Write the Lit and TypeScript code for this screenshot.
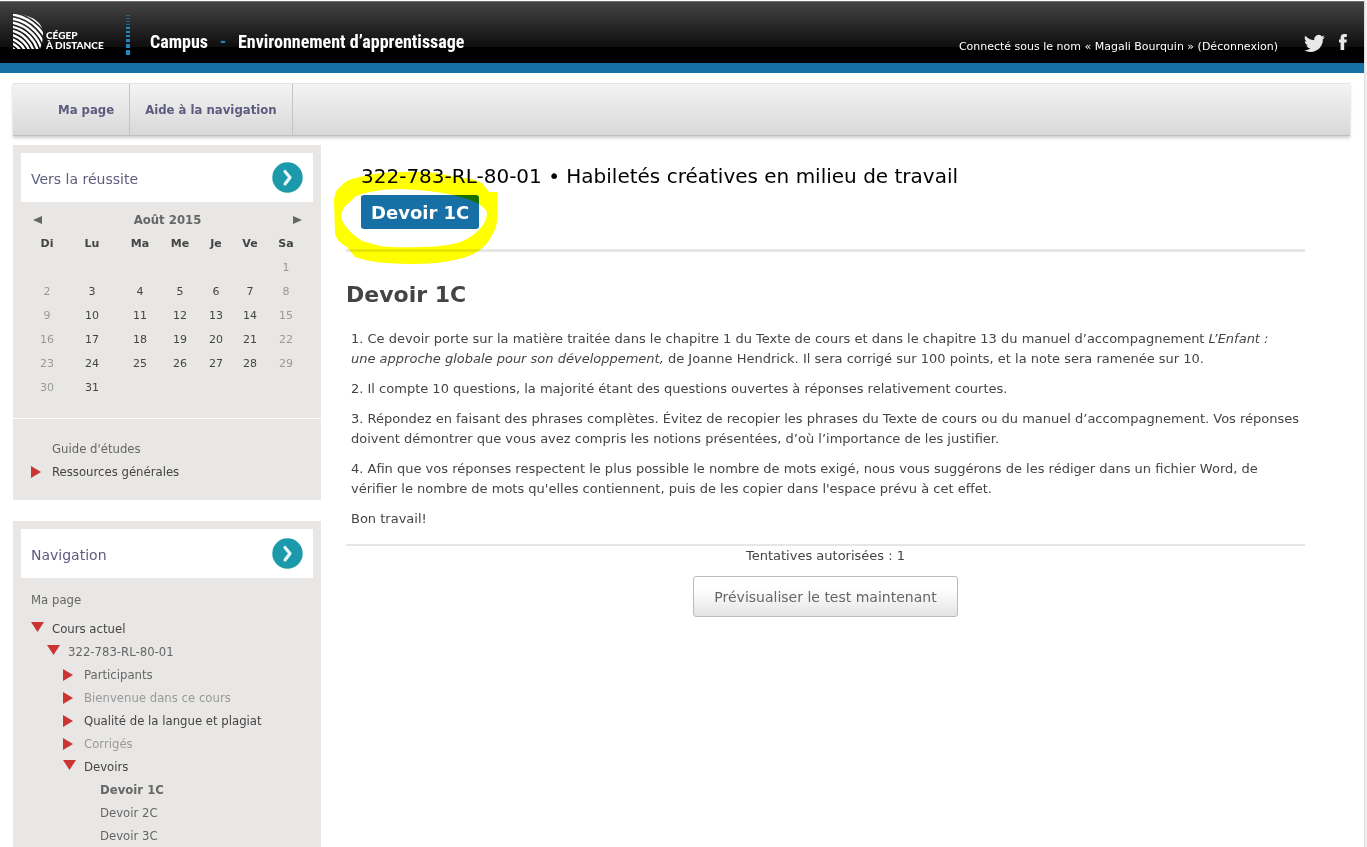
import { LitElement, html, css, svg, nothing } from "lit";
import { customElement, property } from "lit/decorators.js";
import { classMap } from "lit/directives/class-map.js";

type TreeItem = {
  label: string;
  level: number;
  arrow?: "right" | "down";
  tone?: "dark" | "dim" | "current";
};

const WEEKDAYS = ["Di", "Lu", "Ma", "Me", "Je", "Ve", "Sa"];

const WEEKS: (number | null)[][] = [
  [null, null, null, null, null, null, 1],
  [2, 3, 4, 5, 6, 7, 8],
  [9, 10, 11, 12, 13, 14, 15],
  [16, 17, 18, 19, 20, 21, 22],
  [23, 24, 25, 26, 27, 28, 29],
  [30, 31, null, null, null, null, null],
];

const RESOURCES: TreeItem[] = [
  { label: "Guide d'études", level: 1 },
  { label: "Ressources générales", level: 1, arrow: "right", tone: "dark" },
];

const COURSE: TreeItem[] = [
  { label: "Cours actuel", level: 1, arrow: "down", tone: "dark" },
  { label: "322-783-RL-80-01", level: 2, arrow: "down" },
  { label: "Participants", level: 3, arrow: "right" },
  { label: "Bienvenue dans ce cours", level: 3, arrow: "right", tone: "dim" },
  { label: "Qualité de la langue et plagiat", level: 3, arrow: "right", tone: "dark" },
  { label: "Corrigés", level: 3, arrow: "right", tone: "dim" },
  { label: "Devoirs", level: 3, arrow: "down", tone: "dark" },
  { label: "Devoir 1C", level: 4, tone: "current" },
  { label: "Devoir 2C", level: 4 },
  { label: "Devoir 3C", level: 4 },
];

@customElement("nav-tree")
class NavTree extends LitElement {
  @property({ attribute: false }) items: TreeItem[] = [];

  static styles = css`
    :host {
      display: block;
    }
    .list {
      list-style: none;
      margin: 0;
      padding: 0;
    }
    .item {
      display: flex;
      align-items: center;
      height: 23px;
    }
    .l2 { padding-left: 16px; }
    .l3 { padding-left: 32px; }
    .l4 { padding-left: 48px; }
    .mark {
      flex: none;
      width: 21px;
      height: 14px;
    }
    .link {
      color: #666;
      font-size: 13px;
      line-height: 23px;
      text-decoration: none;
      white-space: nowrap;
    }
    .dark { color: #444; }
    .dim { color: #999; }
    .current { font-weight: bold; }
  `;

  render() {
    return html`<ul class="list">
      ${this.items.map(
        (i) => html`<li class="item l${i.level}">
          <svg class="mark" viewBox="0 0 21 14" aria-hidden="true">
            ${i.arrow === "right" ? svg`<path d="M0 1L10 7L0 13Z" fill="#cc3333" />` : nothing}
            ${i.arrow === "down" ? svg`<path d="M0 0H13L6.5 10Z" fill="#cc3333" />` : nothing}
          </svg>
          <a
            class=${classMap({ link: true, dark: i.tone === "dark", dim: i.tone === "dim", current: i.tone === "current" })}
            href="#"
            >${i.label}</a
          >
        </li>`
      )}
    </ul>`;
  }
}

@customElement("block-title")
class BlockTitle extends LitElement {
  @property() label = "";

  static styles = css`
    :host {
      display: flex;
      align-items: center;
      justify-content: space-between;
      height: 49px;
      padding: 0 10px;
      background: #fff;
    }
    .title {
      margin: 0;
      padding-top: 2px;
      color: #5d5c7f;
      font-size: 14px;
      font-weight: normal;
      line-height: 20px;
    }
    .toggle {
      display: block;
      width: 31px;
      height: 31px;
      padding: 0;
      border: 0;
      background: none;
    }
  `;

  render() {
    return html`
      <h2 class="title">${this.label}</h2>
      <button class="toggle" aria-label="Afficher ${this.label}">
        <svg width="31" height="31" viewBox="0 0 31 31">
          <circle cx="15.5" cy="15.5" r="15.2" fill="#1c9aab" />
          <path d="M13 9.5L18 15.5L13 22" fill="none" stroke="#e9f8fa" stroke-width="3.2" stroke-linecap="round" stroke-linejoin="round" />
        </svg>
      </button>
    `;
  }
}

@customElement("app-root")
class AppRoot extends LitElement {
  static styles = css`
    :host {
      display: flex;
      min-height: 100vh;
      background: #fff;
      color: #444;
      font-family: Verdana, "DejaVu Sans", sans-serif;
      font-size: 13px;
      line-height: 20px;
    }
    * { box-sizing: border-box; }
    .page {
      flex: 1;
      min-width: 0;
      display: flex;
      flex-direction: column;
      padding-top: 1px;
    }
    .gutter {
      flex: none;
      width: 3px;
      border-left: 1px solid #dfdfdf;
      background: #f0f0f0;
    }
    .top {
      display: flex;
      align-items: flex-start;
      height: 72px;
      padding: 0 16px 0 13px;
      border-top: 1px solid #6c6c6c;
      border-bottom: 10px solid #166fa5;
      background: linear-gradient(#444 0, #0e0e0e 45px, #000 45px);
    }
    .logo {
      display: flex;
      align-items: flex-start;
      color: #fff;
      text-decoration: none;
      padding-top: 12px;
    }
    .logo-text {
      margin: 16px 0 0 3px;
      width: 72px;
      font: 900 10px/10px Lato, sans-serif;
      white-space: nowrap;
    }
    .dots { margin: 13px 0 0 8px; }
    .brand {
      display: flex;
      margin: 26px 0 0 20px;
      color: #fff;
      font: bold 18px/28px "Roboto Condensed", "Liberation Sans Narrow", sans-serif;
      white-space: nowrap;
    }
    .dash {
      width: 30px;
      color: #1c86c8;
      text-align: center;
    }
    .account {
      margin: 35px 26px 0 auto;
      color: #fff;
      font-size: 11px;
      white-space: nowrap;
    }
    .account-link {
      color: inherit;
      text-decoration: none;
    }
    .social {
      display: flex;
      gap: 13px;
      padding-top: 31px;
    }
    .icon { display: block; }
    .menu {
      display: flex;
      height: 53px;
      margin: 10px 14px 9px 13px;
      border-top: 1px solid #e2e2e2;
      border-bottom: 1px solid #c0c0c0;
      background: linear-gradient(#f4f4f4, #d8d8d8);
      box-shadow: 0 2px 3px rgba(0, 0, 0, 0.2);
      padding-left: 30px;
    }
    .menu-link {
      display: flex;
      align-items: center;
      padding: 0 15px;
      border-right: 1px solid #c4c4c4;
      color: #5d5c7f;
      font-family: Tahoma, "DejaVu Sans Condensed", "DejaVu Sans", sans-serif;
      font-size: 13px;
      font-weight: bold;
      text-decoration: none;
    }
    .body {
      flex: 1;
      display: flex;
      align-items: stretch;
      padding: 0 59px 0 13px;
      gap: 25px;
    }
    .side {
      flex: none;
      display: flex;
      flex-direction: column;
      width: 308px;
      gap: 21px;
      font-family: Tahoma, "DejaVu Sans Condensed", "DejaVu Sans", sans-serif;
    }
    .block {
      padding: 8px;
      background: #e8e7e5;
    }
    .fill { flex: 1; }
    .head { font-family: Verdana, "DejaVu Sans", sans-serif; }
    .month {
      display: flex;
      align-items: center;
      justify-content: space-between;
      height: 24px;
      margin-top: 6px;
      padding: 0 11px 0 12px;
      color: #666;
      font-size: 13px;
    }
    .step {
      width: 9px;
      height: 20px;
      padding: 0;
      border: 0;
      background: none;
      display: flex;
      align-items: center;
    }
    .cal {
      width: 276px;
      margin-left: 8px;
      border-collapse: collapse;
      table-layout: fixed;
      color: #444;
      font: 11px/16px Verdana, "DejaVu Sans", sans-serif;
    }
    .c36 { width: 36px; }
    .c54 { width: 54px; }
    .c42 { width: 42px; }
    .c38 { width: 38px; }
    .c34 { width: 34px; }
    .cell {
      height: 24px;
      padding: 0;
      text-align: center;
    }
    .off { color: #999; }
    .rule {
      height: 1px;
      margin: 18px -8px;
      border: 0;
      background: #fff;
    }
    .tree { margin: 0 10px; }
    .resources { padding-bottom: 17px; }
    .home {
      display: block;
      margin: 12px 10px 7px;
      color: #666;
      text-decoration: none;
    }
    .main {
      flex: 1;
      min-width: 0;
      padding-top: 19px;
    }
    .heading {
      position: relative;
      padding: 0 0 20px 15px;
      border-bottom: 3px solid #e6e6e6;
    }
    .course {
      margin: 0;
      color: #000;
      font-size: 20px;
      font-weight: normal;
      line-height: 24px;
    }
    .badge {
      display: inline-block;
      margin-top: 7px;
      padding: 2px 10px 0;
      border-radius: 3px;
      background: #166fa5;
      color: #fff;
      font-size: 18px;
      font-weight: bold;
      line-height: 32px;
      text-decoration: none;
      vertical-align: top;
    }
    .ring {
      position: absolute;
      left: -16px;
      top: -1px;
      mix-blend-mode: multiply;
      pointer-events: none;
    }
    .subject {
      margin: 29px 0 20px;
      font-size: 22px;
      line-height: 28px;
    }
    .text { padding: 0 0 5px 5px; }
    .para { margin: 0 0 10px; }
    .start {
      display: flex;
      flex-direction: column;
      align-items: center;
      border-top: 2px solid #e6e6e6;
      gap: 10px;
    }
    .tries { margin: 0; }
    .preview {
      height: 41px;
      padding: 0 20px;
      border: 1px solid #bbb;
      border-radius: 3px;
      background: linear-gradient(#fff 30%, #e4e4e4);
      color: #666;
      font: 14px/20px Verdana, "DejaVu Sans", sans-serif;
    }
  `;

  render() {
    return html`
      <div class="page">
        <header class="top">
          <a class="logo" href="#" aria-label="Cégep à distance">
            <svg class="icon" width="30" height="35" viewBox="0 0 30 35" fill="none" stroke="#fff" stroke-width="2.4">
              <defs>
                <clipPath id="fan"><path d="M0 0C18 0 30 8 30 20Q30 28 27 35H0Z" /></clipPath>
              </defs>
              <g clip-path="url(#fan)">
                ${[14, 18, 22, 26, 30, 34, 38, 42, 46, 50].map(
                  (r) => svg`<circle cx="-8" cy="46" r=${r} />`
                )}
              </g>
            </svg>
            <span class="logo-text">CÉGEP<br />À DISTANCE</span>
          </a>
          <svg class="dots" width="4" height="41" viewBox="0 0 4 41" fill="#1f87c4" aria-hidden="true">
            <path d="M0 0h4v1H0zM0 3h4v1H0zM0 6h4v1H0zM0 9h4v1H0z" opacity=".6" />
            <path d="M0 12h4v2H0zM0 16h4v2H0zM0 20h4v2H0zM0 24h4v3H0zM0 29h4v4H0zM0 35h4v5H0z" />
          </svg>
          <div class="brand">
            <span>Campus</span><span class="dash">-</span><span>Environnement d’apprentissage</span>
          </div>
          <div class="account">
            Connecté sous le nom « <a class="account-link" href="#">Magali Bourquin</a> » (<a class="account-link" href="#">Déconnexion</a>)
          </div>
          <div class="social">
            <a href="#" aria-label="Twitter">
              <svg class="icon" width="21" height="21" viewBox="0 0 24 24" fill="#e8e8e8">
                <path d="M23.95 4.57a10 10 0 0 1-2.82.77 4.96 4.96 0 0 0 2.16-2.72c-.95.55-2 .96-3.13 1.18a4.92 4.92 0 0 0-8.38 4.48C7.69 8.1 4.07 6.13 1.64 3.16a4.92 4.92 0 0 0 1.52 6.57 4.9 4.9 0 0 1-2.23-.61v.06a4.92 4.92 0 0 0 3.95 4.83 5 5 0 0 1-2.21.08 4.94 4.94 0 0 0 4.6 3.42A9.87 9.87 0 0 1 0 19.54a13.99 13.99 0 0 0 7.55 2.21c9.05 0 14-7.5 14-13.98 0-.21 0-.42-.02-.63a9.94 9.94 0 0 0 2.46-2.55z" />
              </svg>
            </a>
            <a href="#" aria-label="Facebook">
              <svg class="icon" width="10" height="18" viewBox="0 0 10 18" fill="#e8e8e8">
                <path d="M2.6 17V9.5H1V6.6H2.6V4.8C2.6 2.4 3.8 1 6.2 1H8.8V4H7.2C6.4 4 6.2 4.3 6.2 5V6.6H8.8L8.5 9.5H6.2V17Z" />
              </svg>
            </a>
          </div>
        </header>

        <nav class="menu">
          <a class="menu-link" href="#">Ma page</a>
          <a class="menu-link" href="#">Aide à la navigation</a>
        </nav>

        <div class="body">
          <aside class="side">
            <section class="block resources">
              <block-title class="head" label="Vers la réussite"></block-title>
              <div class="month">
                <button class="step" aria-label="Mois précédent">
                  <svg width="9" height="8" viewBox="0 0 9 8"><path d="M9 0V8L0 4Z" fill="#666" /></svg>
                </button>
                <b>Août 2015</b>
                <button class="step" aria-label="Mois suivant">
                  <svg width="9" height="8" viewBox="0 0 9 8"><path d="M0 0V8L9 4Z" fill="#666" /></svg>
                </button>
              </div>
              <table class="cal">
                <colgroup>
                  <col class="c36" /><col class="c54" /><col class="c42" /><col class="c38" />
                  <col class="c34" /><col class="c34" /><col class="c38" />
                </colgroup>
                <thead>
                  <tr>${WEEKDAYS.map((d) => html`<th class="cell" scope="col">${d}</th>`)}</tr>
                </thead>
                <tbody>
                  ${WEEKS.map(
                    (w) => html`<tr>
                      ${w.map((d, i) => html`<td class=${classMap({ cell: true, off: i === 0 || i === 6 })}>${d ?? nothing}</td>`)}
                    </tr>`
                  )}
                </tbody>
              </table>
              <hr class="rule" />
              <nav-tree class="tree" .items=${RESOURCES}></nav-tree>
            </section>

            <section class="block fill">
              <block-title class="head" label="Navigation"></block-title>
              <a class="home" href="#">Ma page</a>
              <nav-tree class="tree" .items=${COURSE}></nav-tree>
            </section>
          </aside>

          <main class="main">
            <div class="heading">
              <h1 class="course">322-783-RL-80-01 • Habiletés créatives en milieu de travail</h1>
              <a class="badge" href="#">Devoir 1C</a>
              <svg class="ring" width="174" height="104" viewBox="330 163 174 104" aria-hidden="true">
                <path
                  fill="#ff0"
                  fill-rule="evenodd"
                  d="M334 200Q335 190 340 187Q345 181 352 179Q375 172 400 172Q420 171 437 173Q450 176 463 178Q477 179 483 184Q486 188 489 192H497V219Q497 228 492 235Q488 244 480 250Q473 255 463 258Q451 261 437 263Q412 265 387 263Q369 262 355 257Q350 251 347 247Q336 241 335 233ZM341 215Q343 206 350 202Q356 194 370 192Q383 189 400 189Q430 190 453 195Q466 198 477 203Q484 207 487 212Q487 219 483 225Q477 233 470 237Q463 242 453 244Q438 247 420 247Q395 248 380 246Q370 243 362 241Q349 232 345 225Q341 220 341 215Z"
                />
              </svg>
            </div>
            <h2 class="subject">Devoir 1C</h2>
            <div class="text">
              <p class="para">
                1. Ce devoir porte sur la matière traitée dans le chapitre 1 du Texte de cours et dans le chapitre 13 du manuel
                d’accompagnement <i>L’Enfant&nbsp;:</i> <i>une&nbsp;approche globale pour son développement,</i> de Joanne Hendrick.
                Il sera corrigé sur 100 points, et la note sera ramenée sur 10.
              </p>
              <p class="para">2. Il compte 10 questions, la majorité étant des questions ouvertes à réponses relativement courtes.</p>
              <p class="para">
                3. Répondez en faisant des phrases complètes. Évitez de recopier les phrases du Texte de cours ou du manuel
                d’accompagnement. Vos réponses doivent démontrer que vous avez compris les notions présentées, d’où l’importance de
                les justifier.
              </p>
              <p class="para">
                4. Afin que vos réponses respectent le plus possible le nombre de mots exigé, nous vous suggérons de les rédiger dans
                un fichier Word, de vérifier le nombre de mots qu'elles contiennent, puis de les copier dans l'espace prévu à cet
                effet.
              </p>
              <p class="para">Bon travail!</p>
            </div>
            <div class="start">
              <p class="tries">Tentatives autorisées : 1</p>
              <button class="preview">Prévisualiser le test maintenant</button>
            </div>
          </main>
        </div>
      </div>
      <div class="gutter"></div>
    `;
  }
}
